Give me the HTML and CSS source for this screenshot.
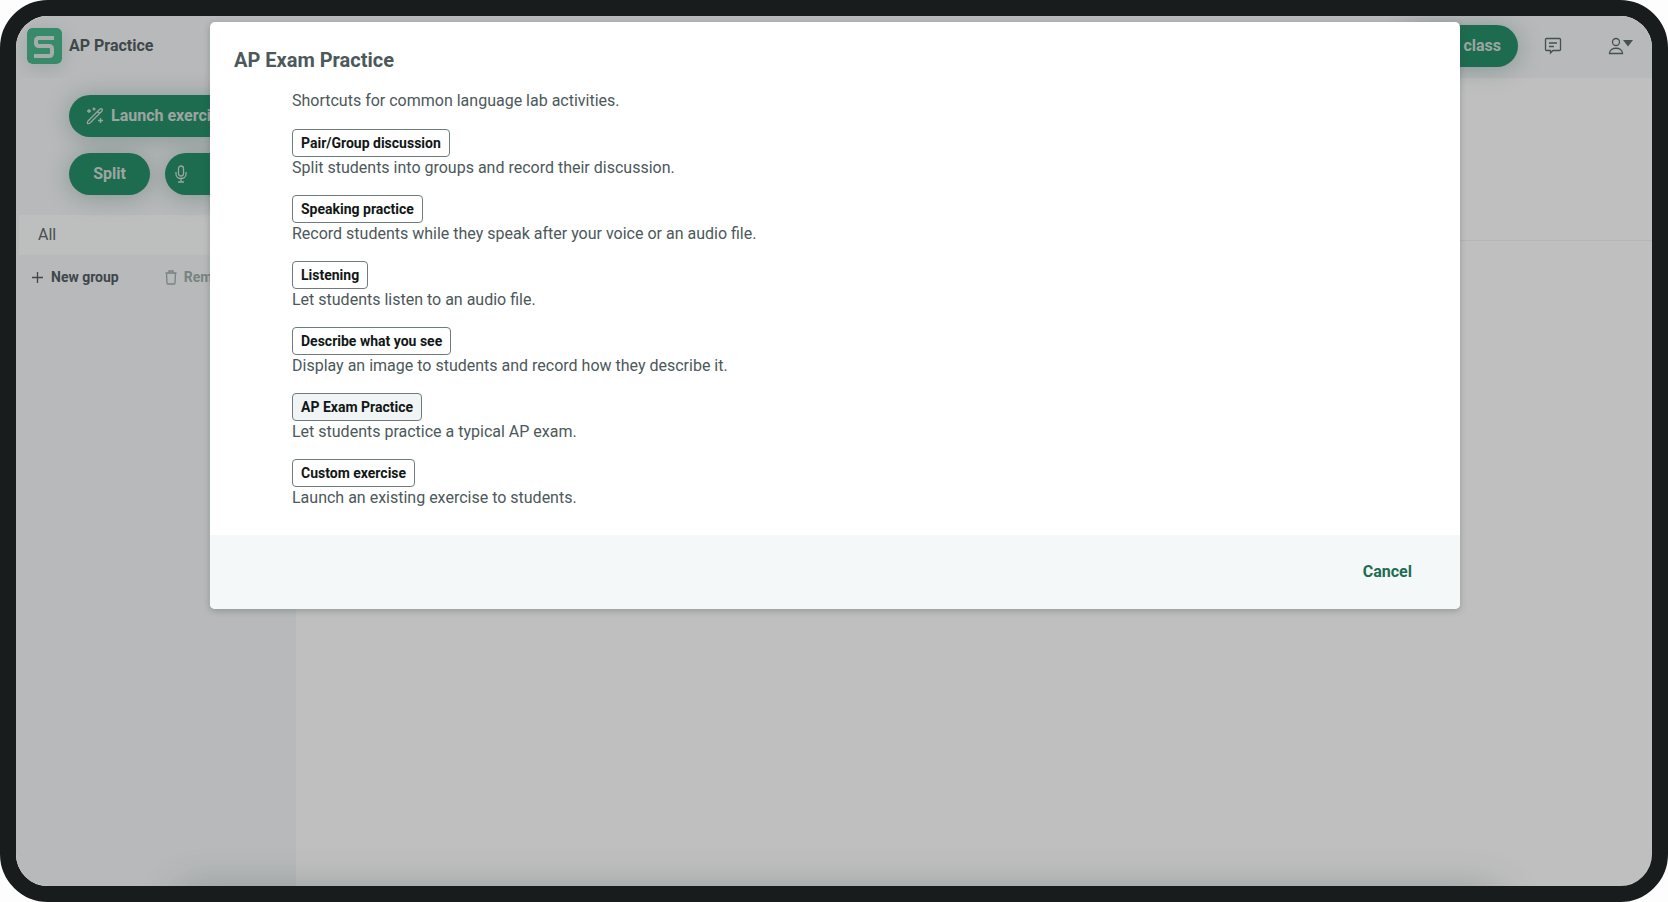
FILE: index.html
```html
<!DOCTYPE html>
<html lang="en">
<head>
    <meta charset="UTF-8">
    <meta name="viewport" content="width=device-width, initial-scale=1.0">
    <title>AP Practice</title>
    <link rel="stylesheet" href="styles.css">
</head>
<body>
    <div class="screen">
        <header class="topbar">
            <a class="brand" href="#">
                <svg class="logo" viewBox="0 0 35 36" aria-hidden="true">
                    <rect width="35" height="36" rx="5" fill="#4ab88e"/>
                    <path d="M27 10H12Q9 10 9 13V15Q9 18 12 18H22Q25 18 25 21V25Q25 28 22 28H7" fill="none" stroke="#dde6e2" stroke-width="4"/>
                </svg>
                <span>AP Practice</span>
            </a>
            <div class="topbar-actions">
                <button class="pill pill-class">Close class</button>
                <button class="icon-button" aria-label="Chat">
                    <svg width="18" height="18" viewBox="0 0 18 18">
                        <path d="M2.500 1.500H15.500Q16.500 1.500 16.500 2.500V12.500Q16.500 13.500 15.500 13.500H9L6.500 16V13.500H2.500Q1.500 13.500 1.500 12.500V2.500Q1.500 1.500 2.500 1.500ZM5 6H13M5 9.500H10"/>
                    </svg>
                </button>
                <button class="icon-button" aria-label="Account">
                    <svg width="26" height="18" viewBox="0 0 26 18">
                        <circle cx="8" cy="5" r="3.500"/>
                        <path d="M1.500 16.500C1.500 9.500 14.500 9.500 14.500 16.500Z"/>
                        <path class="caret" d="M15 3H25L20 9.500Z"/>
                    </svg>
                </button>
            </div>
        </header>
        <div class="workspace">
            <aside class="sidebar">
                <div class="launchers">
                    <button class="pill pill-launch">
                        <svg width="18" height="18" viewBox="0 0 18 18" aria-hidden="true">
                            <path d="M2 14L13.500 2.500Q15 1 16 2Q17 3 15.500 4.500L4 16Q2.500 17 1.500 16.500Q1 15.500 2 14ZM11.500 4.500L13.500 6.500M3 2V6M1 4H5M8 .500V3.500M6.500 2H9.500M14.500 11V16M12 13.500H17"/>
                        </svg>
                        Launch exercise
                    </button>
                    <button class="pill pill-split">Split</button>
                    <button class="pill pill-mic" aria-label="Record">
                        <svg width="12" height="18" viewBox="0 0 12 18">
                            <rect x="3.500" y="1" width="5" height="10" rx="2.500"/>
                            <path d="M1 7V9C1 15 11 15 11 9V7M6 13.500V17M3 17H9"/>
                        </svg>
                    </button>
                </div>
                <a class="all-row" href="#">All</a>
                <div class="group-actions">
                    <button class="text-button">
                        <svg width="13" height="13" viewBox="0 0 13 13" aria-hidden="true">
                            <path d="M6.500 1V12M1 6.500H12"/>
                        </svg>
                        New group
                    </button>
                    <button class="text-button" disabled>
                        <svg width="12" height="15" viewBox="0 0 12 15" aria-hidden="true">
                            <path d="M.500 3H11.500M4 2.500V1H8V2.500M1.500 3L2 13Q2 14 3 14H9Q10 14 10 13L10.500 3"/>
                        </svg>
                        Remove
                    </button>
                </div>
            </aside>
            <main class="stage">
                <div class="stage-head"></div>
            </main>
        </div>
        <div class="bottom-glow"></div>

        <div class="backdrop">
            <section class="dialog" role="dialog" aria-modal="true" aria-labelledby="dialogTitle">
                <h1 class="dialog-title" id="dialogTitle">AP Exam Practice</h1>
                <div class="dialog-body">
                    <p class="intro">Shortcuts for common language lab activities.</p>
                    <ul class="activities">
                        <li>
                            <button class="activity">Pair/Group discussion</button>
                            <p>Split students into groups and record their discussion.</p>
                        </li>
                        <li>
                            <button class="activity">Speaking practice</button>
                            <p>Record students while they speak after your voice or an audio file.</p>
                        </li>
                        <li>
                            <button class="activity">Listening</button>
                            <p>Let students listen to an audio file.</p>
                        </li>
                        <li>
                            <button class="activity">Describe what you see</button>
                            <p>Display an image to students and record how they describe it.</p>
                        </li>
                        <li>
                            <button class="activity active">AP Exam Practice</button>
                            <p>Let students practice a typical AP exam.</p>
                        </li>
                        <li>
                            <button class="activity">Custom exercise</button>
                            <p>Launch an existing exercise to students.</p>
                        </li>
                    </ul>
                </div>
                <footer class="dialog-footer">
                    <button class="cancel">Cancel</button>
                </footer>
            </section>
        </div>
    </div>
</body>
</html>
```

FILE: styles.css
```css
* {
    box-sizing: border-box;
}

body {
    margin: 0;
    background: #fdfdfd;
    color: #4c585a;
    font-family: Roboto, Arial, sans-serif;
    font-size: 16px;
    line-height: 24px;
}

button {
    margin: 0;
    padding: 0;
    border: 0;
    background: none;
    color: inherit;
    font: inherit;
    cursor: pointer;
}

svg {
    flex: none;
    fill: none;
    stroke: currentColor;
    stroke-width: 1.3;
}

p {
    margin: 0;
}

/* device frame */
.screen {
    position: relative;
    display: flex;
    flex-direction: column;
    min-height: 100vh;
    border: 16px solid #181c1d;
    border-radius: 48px;
    overflow: hidden;
    background: #fff;
}

.topbar {
    display: flex;
    align-items: center;
    justify-content: space-between;
    height: 62px;
    padding: 0 18px 2px 11px;
    background: #f5f7f9;
}

.brand {
    display: flex;
    align-items: center;
    gap: 7px;
    color: #536063;
    font-weight: 700;
    text-decoration: none;
}

.logo {
    width: 35px;
    height: 36px;
    border-radius: 5px;
    stroke: none;
    box-shadow: 0 4px 20px rgba(80, 120, 100, 0.2);
}

.topbar-actions {
    display: flex;
    align-items: center;
}

.icon-button {
    display: flex;
    margin-left: 26px;
    color: #5d6b6e;
}

.icon-button + .icon-button {
    margin-left: 46px;
}

.caret {
    fill: currentColor;
    stroke: none;
}

.pill {
    display: flex;
    align-items: center;
    justify-content: center;
    gap: 7px;
    height: 42px;
    padding: 0 17px;
    border-radius: 21px;
    background: #27916b;
    color: #d0ddd7;
    font-weight: 700;
    white-space: nowrap;
    box-shadow: 0 2px 24px rgba(39, 100, 80, 0.32);
}

.workspace {
    display: flex;
    flex: 1;
}

.sidebar {
    width: 280px;
    background: #f5f7f9;
}

.launchers {
    display: grid;
    grid-template-columns: 81px 1fr;
    gap: 16px 15px;
    padding: 17px 16px 20px 53px;
}

.pill-launch {
    grid-column: 1 / -1;
    justify-content: flex-start;
}

.pill-mic {
    justify-content: flex-start;
    padding: 0 10px;
}

.all-row {
    display: block;
    margin-left: 3px;
    padding: 8px 19px;
    background: #fdfefe;
    color: #5d6b6e;
    text-decoration: none;
}

.group-actions {
    display: flex;
    gap: 46px;
    padding: 10px 15px;
}

.text-button {
    display: flex;
    align-items: center;
    gap: 7px;
    color: #536063;
    font-size: 14px;
    font-weight: 700;
}

.text-button:disabled {
    color: #9fb0ac;
    cursor: default;
}

.stage {
    flex: 1;
}

.stage-head {
    height: 163px;
    border-bottom: 1px solid #f0f2f2;
}

/* shadow cast by the toolbar docked below the screen edge */
.bottom-glow {
    position: absolute;
    left: 160px;
    right: 150px;
    bottom: -46px;
    height: 42px;
    border-radius: 21px;
    box-shadow: 0 0 40px rgba(50, 90, 80, 0.3);
}

.backdrop {
    position: absolute;
    inset: 0;
    background: rgba(0, 0, 0, 0.25);
}

.dialog {
    margin: 6px 192px 0 194px;
    border-radius: 5px;
    overflow: hidden;
    background: #fff;
    box-shadow: 0 2px 6px rgba(50, 70, 65, 0.3);
}

.dialog-title {
    margin: 0;
    padding: 26px 24px 14px;
    font-size: 20px;
    line-height: 24px;
    font-weight: 700;
}

.dialog-body {
    padding: 3px 82px 26px;
}

.intro {
    margin-bottom: 16px;
}

.activities {
    display: flex;
    flex-direction: column;
    gap: 16px;
    margin: 0;
    padding: 0;
    list-style: none;
    line-height: 22px;
}

.activity {
    display: block;
    height: 28px;
    padding: 0 8px;
    border: 1px solid #6f7c7c;
    border-radius: 4px;
    background: #fff;
    color: #111716;
    font-size: 14px;
    font-weight: 700;
}

.activity.active {
    background: #f0f4f4;
}

.dialog-footer {
    display: flex;
    justify-content: flex-end;
    padding: 25px 48px;
    background: #f5f8f9;
}

.cancel {
    color: #1d6d50;
    font-weight: 700;
}
```
